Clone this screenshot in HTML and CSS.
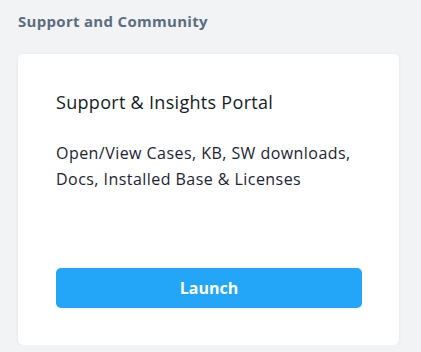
FILE: index.html
```html
<!DOCTYPE html>
<html lang="en">
<head>
  <meta charset="UTF-8" />
  <meta name="viewport" content="width=device-width, initial-scale=1.0"/>
  <title>Support and Community</title>
  <link rel="stylesheet" href="styles.css">
</head>
<body>
  <main class="section">
    <h2 class="section-title">Support and Community</h2>

    <div class="portal-card">
      <h3 class="portal-title">Support &amp; Insights Portal</h3>
      <p class="portal-desc">Open/View Cases, KB, SW downloads, Docs, Installed Base &amp; Licenses</p>
      <button type="button" class="launch-btn">Launch</button>
    </div>
  </main>
</body>
</html>
```

FILE: styles.css
```css
body {
  font-family: 'Open Sans', 'Liberation Sans', sans-serif;
  background: #f2f3f5;
  margin: 0;
  padding: 0;
}
.section {
  padding: 11px 22px 0 18px;
}
.section-title {
  margin: 0;
  font-size: 15px;
  line-height: 20px;
  font-weight: 700;
  letter-spacing: 0.3px;
  color: #5b6d80;
}
.portal-card {
  margin-top: 23px;
  background-color: #ffffff;
  border-radius: 5px;
  padding: 36px 37px 37px 38px;
  box-shadow: 0 1px 4px rgba(0, 0, 0, 0.06);
}
.portal-title {
  margin: 0;
  font-size: 18px;
  line-height: 24px;
  font-weight: 400;
  letter-spacing: 0.3px;
  color: #151b26;
}
.portal-desc {
  margin: 26px 0 0;
  font-size: 16px;
  line-height: 26px;
  letter-spacing: 0.45px;
  color: #1c2433;
}
.launch-btn {
  display: block;
  width: 100%;
  height: 40px;
  margin-top: 76px;
  background-color: #23a6f7;
  color: white;
  border: none;
  border-radius: 5px;
  font-family: 'Open Sans', 'Liberation Sans', sans-serif;
  font-size: 16px;
  font-weight: 700;
  cursor: pointer;
}
```
